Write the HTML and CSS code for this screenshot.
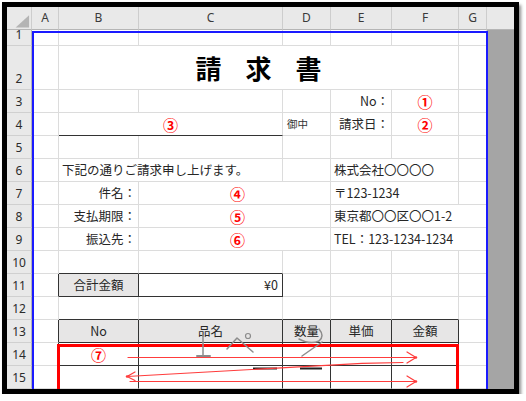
FILE: index.html
```html
<!DOCTYPE html>
<html lang="ja">
<head>
<meta charset="utf-8">
<title>請求書</title>
<link rel="stylesheet" href="styles.css">
</head>
<body>
<div class="frame">
  <div class="sheet">
    <!-- column headers -->
    <div class="ch corner"><svg width="25" height="23" viewBox="0 0 25 23"><polygon points="23,8 23,21 9,21" fill="#b4b4b4"/></svg></div>
    <div class="ch">A</div><div class="ch">B</div><div class="ch">C</div><div class="ch">D</div><div class="ch">E</div><div class="ch">F</div><div class="ch">G</div><div class="ch last"></div>

    <!-- row 1 -->
    <div class="rh">1</div><div class="c"></div><div class="c"></div><div class="c"></div><div class="c"></div><div class="c"></div><div class="c"></div><div class="c"></div><div class="out"></div>
    <!-- row 2 -->
    <div class="rh">2</div><div class="c"></div>
    <div class="c s5 title"><span>請</span><span>求</span><span>書</span></div>
    <div class="c"></div><div class="out"></div>
    <!-- row 3 -->
    <div class="rh">3</div><div class="c"></div><div class="c"></div><div class="c"></div><div class="c"></div>
    <div class="c r">No：</div><div class="c m red">①</div><div class="c"></div><div class="out"></div>
    <!-- row 4 -->
    <div class="rh">4</div><div class="c"></div>
    <div class="c s2 m red db">③</div>
    <div class="c small">御中</div><div class="c r">請求日：</div><div class="c m red">②</div><div class="c"></div><div class="out"></div>
    <!-- row 5 -->
    <div class="rh">5</div><div class="c"></div><div class="c"></div><div class="c"></div><div class="c"></div><div class="c"></div><div class="c"></div><div class="c"></div><div class="out"></div>
    <!-- row 6 -->
    <div class="rh">6</div><div class="c"></div>
    <div class="c s2">下記の通りご請求申し上げます。</div>
    <div class="c"></div><div class="c s2">株式会社〇〇〇〇</div><div class="c"></div><div class="out"></div>
    <!-- row 7 -->
    <div class="rh">7</div><div class="c"></div><div class="c r">件名：</div>
    <div class="c s2 m red num">④</div>
    <div class="c s2">〒123-1234</div><div class="c"></div><div class="out"></div>
    <!-- row 8 -->
    <div class="rh">8</div><div class="c"></div><div class="c r">支払期限：</div>
    <div class="c s2 m red num">⑤</div>
    <div class="c s3">東京都〇〇区〇〇1-2</div><div class="out"></div>
    <!-- row 9 -->
    <div class="rh">9</div><div class="c"></div><div class="c r">振込先：</div>
    <div class="c s2 m red num">⑥</div>
    <div class="c s3">TEL：123-1234-1234</div><div class="out"></div>
    <!-- row 10 -->
    <div class="rh">10</div><div class="c"></div><div class="c db"></div><div class="c db"></div><div class="c"></div><div class="c"></div><div class="c"></div><div class="c"></div><div class="out"></div>
    <!-- row 11 -->
    <div class="rh">11</div><div class="c dr"></div>
    <div class="c m hd dr db">合計金額</div>
    <div class="c r dr db yen">¥0</div>
    <div class="c"></div><div class="c"></div><div class="c"></div><div class="c"></div><div class="out"></div>
    <!-- row 12 -->
    <div class="rh">12</div><div class="c"></div><div class="c db"></div><div class="c db"></div><div class="c db"></div><div class="c db"></div><div class="c db"></div><div class="c"></div><div class="out"></div>
    <!-- row 13 -->
    <div class="rh">13</div><div class="c dr"></div>
    <div class="c m hd dr db">No</div><div class="c m hd dr db">品名</div><div class="c m hd dr db">数量</div><div class="c m hd dr db">単価</div><div class="c m hd dr db">金額</div>
    <div class="c"></div><div class="out"></div>
    <!-- row 14 -->
    <div class="rh">14</div><div class="c dr"></div>
    <div class="c m red dr db">⑦</div><div class="c dr db"></div><div class="c dr db"></div><div class="c dr db"></div><div class="c dr db"></div>
    <div class="c"></div><div class="out"></div>
    <!-- row 15 -->
    <div class="rh">15</div><div class="c dr"></div>
    <div class="c dr"></div><div class="c dr"></div><div class="c dr"></div><div class="c dr"></div><div class="c dr"></div>
    <div class="c"></div><div class="out"></div>
  </div>

  <div class="print-area"></div>
  <div class="red-box"></div>

  <svg class="ink" width="507" height="382" viewBox="7 7 507 382">
    <g fill="none" stroke="#222" stroke-width="2">
      <path d="M253 368.5 H277 M300 368.5 H322"/>
    </g>
    <g fill="none" stroke="#ff3c3c" stroke-width="1.2" stroke-linecap="round" stroke-linejoin="round">
      <path d="M128 357.5 H416 M407 352 L416 357.5 L407 363"/>
      <path d="M403 362.5 L362 363.3 L127 376.5 M135 372 L127 376.5 L135 380.5"/>
      <path d="M130 381.5 H416 M407 376 L416 381.5 L407 387"/>
    </g>
    <g fill="#ff3c3c">
      <circle cx="416" cy="357.5" r="1.2"/>
      <circle cx="416" cy="381.5" r="1.2"/>
      <circle cx="127" cy="376.5" r="1.2"/>
    </g>
    <g fill="none" stroke="#8c8c8c" stroke-width="1.5" stroke-linecap="round" stroke-linejoin="round">
      <path d="M203 335 V356"/>
      <path d="M197 356 H210" stroke-width="2"/>
      <path d="M227 349 L237 338 L253 352"/>
      <circle cx="248" cy="336" r="2.5" stroke-width="1.2"/>
      <path d="M319 329 Q325 336 319 341 Q310 345 299 339"/>
      <path d="M302 356 L322 342"/>
    </g>
  </svg>
</div>
</body>
</html>
```

FILE: styles.css
```css
* { box-sizing: border-box; }

html, body {
  margin: 0;
  padding: 0;
  background: #ffffff;
}

body {
  padding: 2px 0 0 2px;
  font-family: "Noto Sans CJK JP", "Noto Sans", sans-serif;
}

.frame {
  position: relative;
  width: 517px;
  height: 392px;
  border: 5px solid #000;
  overflow: hidden;
  box-shadow: 2px 3px 3px rgba(0, 0, 0, 0.45);
  background: #fff;
}

.sheet {
  display: grid;
  grid-template-columns: 25px 27px 80px 144px 48px 61px 67px 28px 27px;
  grid-template-rows: 23px 16px 44px repeat(13, 23px);
  font-size: 12.5px;
  color: #262626;
  line-height: 1;
}

.ch {
  background: #e9e9e9;
  border-right: 1px solid #cdcdcd;
  border-bottom: 1px solid #b5b5b5;
  display: flex;
  align-items: center;
  justify-content: center;
  font-family: "Noto Sans", sans-serif;
  font-size: 12px;
  color: #3a3a3a;
}

.corner { padding: 0; align-items: stretch; justify-content: stretch; }
.corner svg { display: block; }
.ch.last { border-right: none; }

.rh {
  background: #e9e9e9;
  border-right: 1px solid #b5b5b5;
  border-bottom: 1px solid #d0d0d0;
  display: flex;
  align-items: flex-end;
  justify-content: center;
  padding-bottom: 4px;
  font-family: "Noto Sans", sans-serif;
  font-size: 12px;
  color: #2c2c2c;
}

.c {
  border-right: 1px solid #dcdcdc;
  border-bottom: 1px solid #dcdcdc;
  display: flex;
  align-items: center;
  padding: 0 3px;
  white-space: nowrap;
  overflow: visible;
  min-width: 0;
}

.out { background: #a5a5a5; }

.s2 { grid-column: span 2; }
.s3 { grid-column: span 3; }
.s5 { grid-column: span 5; }

.r { justify-content: flex-end; padding-right: 2px; }
.m { justify-content: center; }

.red {
  color: #ff0000;
  font-weight: 700;
  font-size: 15px;
}

.num { padding-left: 9px; }

.small { font-size: 10.5px; padding-left: 4px; color: #333333; }

.yen { padding-right: 4px; }

.title {
  justify-content: center;
  gap: 24px;
  font-size: 26px;
  font-weight: 700;
  color: #000;
  padding: 0;
}

.hd { background: #e7e6e6; }

.dr { border-right-color: #333; }
.db { border-bottom-color: #333; }

.print-area {
  position: absolute;
  left: 25px;
  top: 24px;
  width: 456px;
  height: 400px;
  border: 2px solid #1a1aff;
  pointer-events: none;
}

.red-box {
  position: absolute;
  left: 50px;
  top: 337px;
  width: 402px;
  height: 100px;
  border: 3px solid #ff0000;
  pointer-events: none;
}

.ink {
  position: absolute;
  left: 0;
  top: 0;
  pointer-events: none;
}
```
